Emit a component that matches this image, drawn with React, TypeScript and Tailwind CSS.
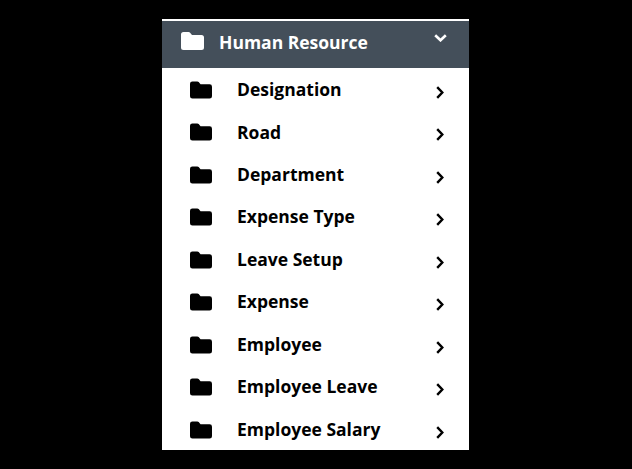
const items = ["Designation", "Road", "Department", "Expense Type", "Leave Setup", "Expense", "Employee", "Employee Leave", "Employee Salary"];

function Folder({ className }: { className: string }) {
  return (
    <svg viewBox="0 0 23 18" className={className} fill="currentColor" aria-hidden="true">
      <path d="M2.5 0H7.6a2 2 0 0 1 1.5.7L11 3h9.5A2.5 2.5 0 0 1 23 5.5v10a2.5 2.5 0 0 1-2.5 2.5h-18A2.5 2.5 0 0 1 0 15.5v-13A2.5 2.5 0 0 1 2.5 0z" />
    </svg>
  );
}

export default function App() {
  return (
    <div className="h-[469px] overflow-hidden bg-black pt-[19px] pl-[162px] font-['Open_Sans',sans-serif]">
      <div className="h-[431px] w-[307px] bg-white">
        <div className="flex h-[49px] items-start border-t-2 border-white bg-[#444f5a] pl-[19px] pr-[22px] text-white">
          <Folder className="mt-[11px] h-[18px] w-[23px] shrink-0" />
          <span className="ml-[15px] mt-[9px] text-[17.5px] leading-[24px] font-bold">Human Resource</span>
          <svg viewBox="0 0 13 8" className="ml-auto mt-[13px] h-[8px] w-[13px]" fill="none" stroke="currentColor" strokeWidth="2.6" aria-hidden="true">
            <path d="M1.2 1.2 6.5 6.3l5.3-5.1" />
          </svg>
        </div>
        <ul>
          {items.map((t) => (
            <li key={t} className="flex h-[42.48px] items-start pl-[28px] pr-[25px] text-black">
              <Folder className="mt-[13px] h-[18px] w-[22px] shrink-0" />
              <span className="ml-[25px] mt-[9.04px] text-[17.5px] leading-[24px] font-bold">{t}</span>
              <svg viewBox="0 0 8 13" className="ml-auto mt-[18px] h-[13px] w-[8px]" fill="none" stroke="currentColor" strokeWidth="2.4" aria-hidden="true">
                <path d="M1.2 1.2 6.3 6.5l-5.1 5.3" />
              </svg>
            </li>
          ))}
        </ul>
      </div>
    </div>
  );
}
